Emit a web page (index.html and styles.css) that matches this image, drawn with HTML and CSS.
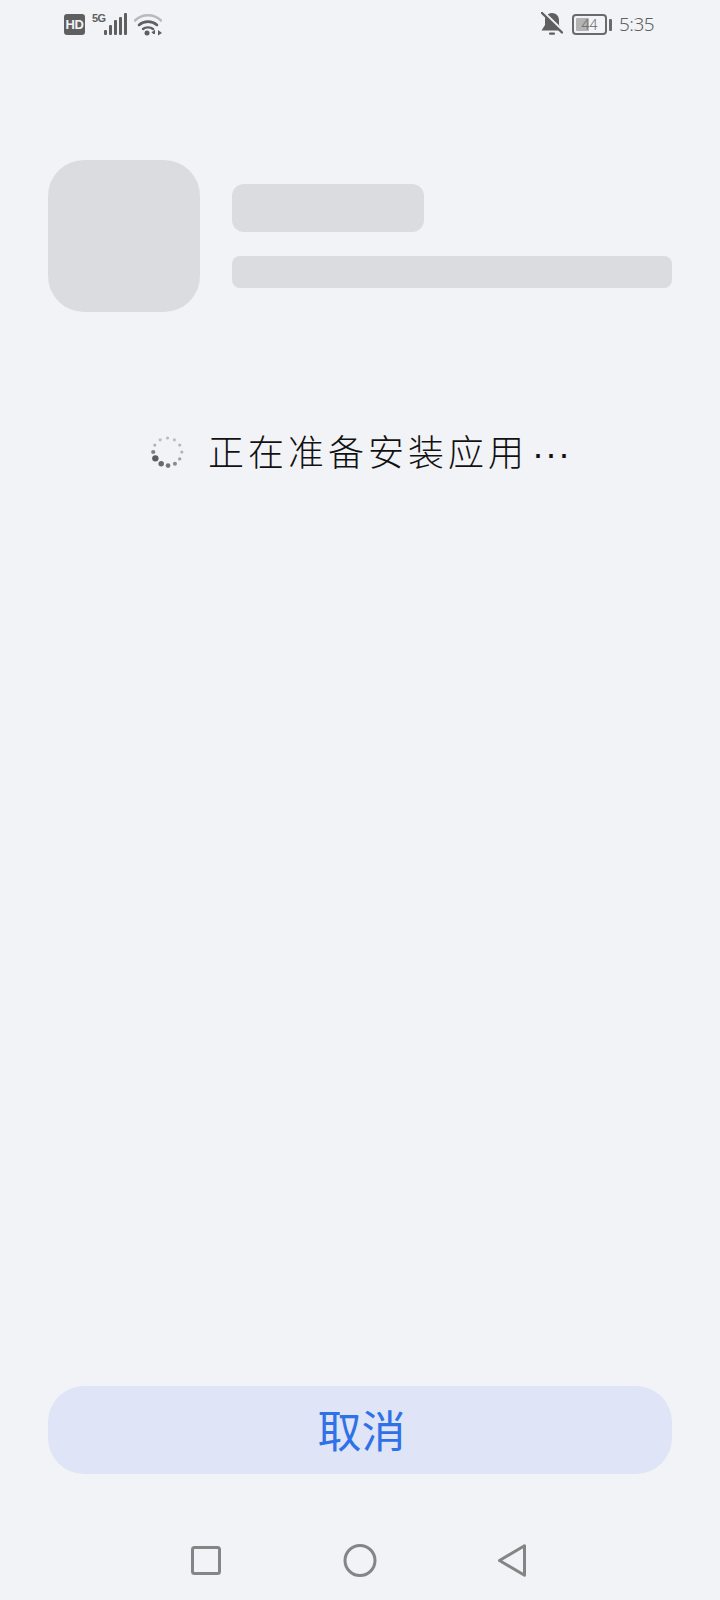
FILE: index.html
```html
<!DOCTYPE html>
<html lang="zh">
<head>
<meta charset="utf-8">
<title>正在准备安装应用</title>
<link rel="stylesheet" href="styles.css">
</head>
<body>
<div class="screen">
  <header class="status">
    <div class="status-left">
      <span class="hd">HD</span>
      <span class="net">5G</span>
      <svg class="signal" width="23" height="22" viewBox="0 0 23 22"><g fill="#5f5f5f"><rect x="0" y="17" width="3" height="5" rx="1"/><rect x="5" y="12" width="3" height="10" rx="1"/><rect x="10" y="7" width="3" height="15" rx="1"/><rect x="15" y="4" width="3" height="18" rx="1"/><rect x="20" y="0" width="3" height="22" rx="1"/></g></svg>
      <svg class="wifi" width="28" height="24" viewBox="0 0 28 24"><g fill="none" stroke-linecap="round"><path d="M1 8.500C8 1.500 20 1.500 27 8.500" stroke="#b9babc" stroke-width="2.600"/><path d="M5 13C10 8.500 18 8.500 23 13" stroke="#5f5f5f" stroke-width="2.600"/><path d="M9 17C11.500 14.800 16.500 14.800 19 17" stroke="#5f5f5f" stroke-width="2.400"/></g><g fill="#5f5f5f"><circle cx="13" cy="21" r="2.500"/><path d="M21 17.500V22H19.500L17.500 20.500Z"/><path d="M24 18V23.500L28 21Z"/></g></svg>
    </div>
    <div class="status-right">
      <svg class="bell" width="22" height="24" viewBox="0 0 22 24"><path d="M11 1C7 1 4 4 4 8V13L0.500 18.500H21.500L18 13V8C18 4 15 1 11 1Z" fill="#5f5f5f"/><rect x="8" y="20.500" width="6" height="2.200" rx="1" fill="#5f5f5f"/><path d="M2.500 0L22.500 19.500" stroke="#f2f3f7" stroke-width="2.500"/><path d="M1 1L21 20.500" stroke="#5f5f5f" stroke-width="2.400" stroke-linecap="round"/></svg>
      <div class="battery">
        <div class="cell"><span class="charge"></span><span class="level">44</span></div>
        <span class="nub"></span>
      </div>
      <span class="time">5:35</span>
    </div>
  </header>

  <section class="app">
    <div class="app-icon"></div>
    <div class="app-meta">
      <div class="app-name"></div>
      <div class="app-desc"></div>
    </div>
  </section>

  <section class="progress">
    <svg class="spinner" width="36" height="36" viewBox="0 0 34 34">
      <g>
        <circle cx="6" cy="23" r="3" fill="#5d5d5f"/>
        <circle cx="11.500" cy="28" r="2.600" fill="#68686a"/>
        <circle cx="18" cy="29.800" r="2.200" fill="#747476"/>
        <circle cx="24.500" cy="28" r="1.900" fill="#8a8a8c"/>
        <circle cx="29" cy="23.500" r="1.600" fill="#a4a4a6"/>
        <circle cx="31" cy="17" r="1.500" fill="#b2b2b4"/>
        <circle cx="29" cy="10.500" r="1.500" fill="#b8b8ba"/>
        <circle cx="24" cy="5.500" r="1.500" fill="#bcbcbe"/>
        <circle cx="17.500" cy="3.800" r="1.500" fill="#bcbcbe"/>
        <circle cx="10.500" cy="5.500" r="1.500" fill="#bcbcbe"/>
        <circle cx="5.500" cy="10.500" r="1.500" fill="#b2b2b4"/>
        <circle cx="4" cy="17" r="2" fill="#808082"/>
      </g>
    </svg>
    <span class="progress-text">正在准备安装应用<span class="dots">···</span></span>
  </section>

  <div class="spacer"></div>

  <button class="cancel" type="button">取消</button>

  <nav class="navbar">
    <svg width="32" height="34" viewBox="0 0 32 34"><rect x="2.500" y="3.500" width="27" height="26" rx="2" fill="none" stroke="#858585" stroke-width="3"/></svg>
    <svg width="36" height="34" viewBox="0 0 36 34"><circle cx="18" cy="16.500" r="15" fill="none" stroke="#858585" stroke-width="3"/></svg>
    <svg width="28" height="34" viewBox="0 0 28 34"><path d="M26.500 1.800V31.200L1.500 16.500Z" fill="none" stroke="#858585" stroke-width="3" stroke-linejoin="round"/></svg>
  </nav>
</div>
</body>
</html>
```

FILE: styles.css
```css
* { box-sizing: border-box; }
html, body { margin: 0; padding: 0; }
body {
  width: 720px;
  height: 1600px;
  overflow: hidden;
  background: #f2f3f7;
  font-family: "Noto Sans CJK SC", "Noto Sans", sans-serif;
}
.screen {
  width: 720px;
  height: 1600px;
  display: flex;
  flex-direction: column;
}
.status {
  height: 48px;
  padding: 13px 65px 0 64px;
  display: flex;
  justify-content: space-between;
  align-items: flex-start;
}
.status-left, .status-right { display: flex; align-items: flex-start; }
.hd {
  width: 21px;
  height: 21px;
  margin-top: 1px;
  background: #5f5f5f;
  border-radius: 3px;
  color: #f2f3f7;
  font: 700 13px/21px "Liberation Sans Narrow", "Liberation Sans", sans-serif;
  letter-spacing: -0.5px;
  text-align: center;
}
.net {
  width: 12px;
  margin-left: 7px;
  color: #5f5f5f;
  font: 700 11px/10px "Liberation Sans Narrow", "Liberation Sans", sans-serif;
  letter-spacing: -0.5px;
}
.wifi { margin: -1px 0 0 7px; }
.bell { margin-top: -1px; }
.battery { display: flex; align-items: center; margin: 1px 0 0 9px; }
.cell {
  position: relative;
  width: 35px;
  height: 21px;
  border: 2px solid #6a6a6a;
  border-radius: 4px;
  padding: 2px;
}
.charge { display: block; width: 13px; height: 13px; background: #b4b4b6; border-radius: 1px; }
.level {
  position: absolute;
  inset: 0;
  text-align: center;
  color: #6a6a6a;
  font: 300 14px/17px "Noto Sans", sans-serif;
}
.nub { width: 3px; height: 12px; margin-left: 2px; background: #6a6a6a; border-radius: 1px; }
.time {
  width: 36px;
  margin-left: 7px;
  color: #5f5f5f;
  font: 300 19px/22px "Noto Sans", sans-serif;
  letter-spacing: -0.5px;
  white-space: nowrap;
}
.app {
  margin-top: 112px;
  padding: 0 48px;
  display: flex;
  gap: 32px;
  align-items: flex-start;
}
.app-icon {
  width: 152px;
  height: 152px;
  flex: none;
  background: #dbdcdf;
  border-radius: 36px;
}
.app-meta { flex: 1; padding-top: 24px; display: flex; flex-direction: column; gap: 24px; }
.app-name { width: 192px; height: 48px; background: #dbdcdf; border-radius: 12px; }
.app-desc { height: 32px; background: #dbdcdf; border-radius: 8px; }
.progress {
  margin-top: 109px;
  padding-left: 149px;
  display: flex;
  align-items: center;
  height: 62px;
}
.spinner { flex: none; }
.progress-text {
  margin-left: 23px;
  color: #111111;
  font-size: 36px;
  font-weight: 300;
  line-height: 62px;
  letter-spacing: 4px;
  white-space: nowrap;
}
.dots {
  margin-left: 4px;
  letter-spacing: 1px;
  font-family: "Liberation Sans", sans-serif;
  font-size: 36px;
  font-weight: 400;
}
.spacer { flex: 1; }
.cancel {
  margin: 0 48px;
  height: 88px;
  border: 0;
  border-radius: 36px;
  background: #dfe4f6;
  color: #2f72e8;
  font-family: inherit;
  font-size: 44px;
  font-weight: 400;
  line-height: 86px;
  padding: 0 0 2px 3px;
}
.navbar {
  height: 126px;
  padding: 70px 0 0 190px;
  display: flex;
  gap: 120px;
  align-items: flex-start;
}
```
